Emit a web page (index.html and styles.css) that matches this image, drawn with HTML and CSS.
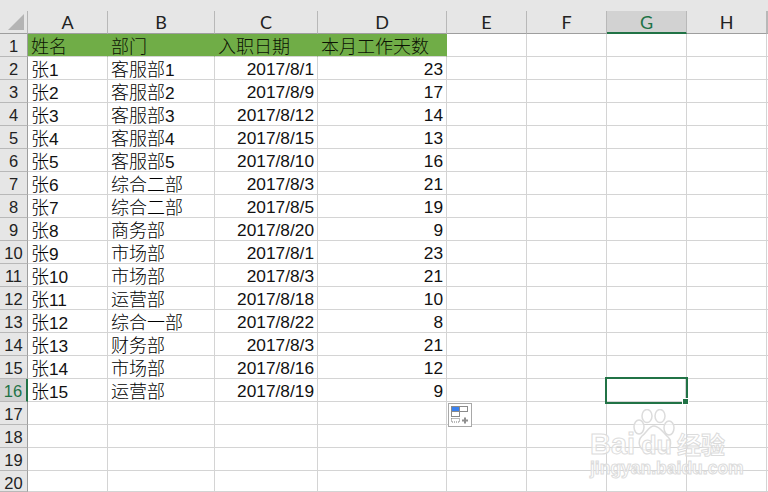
FILE: index.html
```html
<!DOCTYPE html>
<html lang="zh-CN">
<head>
<meta charset="utf-8">
<title>Sheet</title>
<link rel="stylesheet" href="styles.css">
</head>
<body>
<div class="top-band"></div>
<div class="sheet">
<div class="corner"><svg width="28" height="22" viewBox="0 0 28 22"><polygon points="8,19 24,19 24,3" fill="#b4b4b4"/></svg></div>
<div class="ch">A</div><div class="ch">B</div><div class="ch">C</div><div class="ch">D</div><div class="ch">E</div><div class="ch">F</div><div class="ch sel-col">G</div><div class="ch">H</div><div class="ch"></div>

<div class="rh">1</div><div class="c g">姓名</div><div class="c g">部门</div><div class="c g">入职日期</div><div class="c g">本月工作天数</div><div class="c"></div><div class="c"></div><div class="c"></div><div class="c"></div><div class="c"></div>
<div class="rh">2</div><div class="c">张<span class="n">1</span></div><div class="c">客服部<span class="n">1</span></div><div class="c r n">2017/8/1</div><div class="c r n">23</div><div class="c"></div><div class="c"></div><div class="c"></div><div class="c"></div><div class="c"></div>
<div class="rh">3</div><div class="c">张<span class="n">2</span></div><div class="c">客服部<span class="n">2</span></div><div class="c r n">2017/8/9</div><div class="c r n">17</div><div class="c"></div><div class="c"></div><div class="c"></div><div class="c"></div><div class="c"></div>
<div class="rh">4</div><div class="c">张<span class="n">3</span></div><div class="c">客服部<span class="n">3</span></div><div class="c r n">2017/8/12</div><div class="c r n">14</div><div class="c"></div><div class="c"></div><div class="c"></div><div class="c"></div><div class="c"></div>
<div class="rh">5</div><div class="c">张<span class="n">4</span></div><div class="c">客服部<span class="n">4</span></div><div class="c r n">2017/8/15</div><div class="c r n">13</div><div class="c"></div><div class="c"></div><div class="c"></div><div class="c"></div><div class="c"></div>
<div class="rh">6</div><div class="c">张<span class="n">5</span></div><div class="c">客服部<span class="n">5</span></div><div class="c r n">2017/8/10</div><div class="c r n">16</div><div class="c"></div><div class="c"></div><div class="c"></div><div class="c"></div><div class="c"></div>
<div class="rh">7</div><div class="c">张<span class="n">6</span></div><div class="c">综合二部</div><div class="c r n">2017/8/3</div><div class="c r n">21</div><div class="c"></div><div class="c"></div><div class="c"></div><div class="c"></div><div class="c"></div>
<div class="rh">8</div><div class="c">张<span class="n">7</span></div><div class="c">综合二部</div><div class="c r n">2017/8/5</div><div class="c r n">19</div><div class="c"></div><div class="c"></div><div class="c"></div><div class="c"></div><div class="c"></div>
<div class="rh">9</div><div class="c">张<span class="n">8</span></div><div class="c">商务部</div><div class="c r n">2017/8/20</div><div class="c r n">9</div><div class="c"></div><div class="c"></div><div class="c"></div><div class="c"></div><div class="c"></div>
<div class="rh">10</div><div class="c">张<span class="n">9</span></div><div class="c">市场部</div><div class="c r n">2017/8/1</div><div class="c r n">23</div><div class="c"></div><div class="c"></div><div class="c"></div><div class="c"></div><div class="c"></div>
<div class="rh">11</div><div class="c">张<span class="n">10</span></div><div class="c">市场部</div><div class="c r n">2017/8/3</div><div class="c r n">21</div><div class="c"></div><div class="c"></div><div class="c"></div><div class="c"></div><div class="c"></div>
<div class="rh">12</div><div class="c">张<span class="n">11</span></div><div class="c">运营部</div><div class="c r n">2017/8/18</div><div class="c r n">10</div><div class="c"></div><div class="c"></div><div class="c"></div><div class="c"></div><div class="c"></div>
<div class="rh">13</div><div class="c">张<span class="n">12</span></div><div class="c">综合一部</div><div class="c r n">2017/8/22</div><div class="c r n">8</div><div class="c"></div><div class="c"></div><div class="c"></div><div class="c"></div><div class="c"></div>
<div class="rh">14</div><div class="c">张<span class="n">13</span></div><div class="c">财务部</div><div class="c r n">2017/8/3</div><div class="c r n">21</div><div class="c"></div><div class="c"></div><div class="c"></div><div class="c"></div><div class="c"></div>
<div class="rh">15</div><div class="c">张<span class="n">14</span></div><div class="c">市场部</div><div class="c r n">2017/8/16</div><div class="c r n">12</div><div class="c"></div><div class="c"></div><div class="c"></div><div class="c"></div><div class="c"></div>
<div class="rh sel-row">16</div><div class="c">张<span class="n">15</span></div><div class="c">运营部</div><div class="c r n">2017/8/19</div><div class="c r n">9</div><div class="c"></div><div class="c"></div><div class="c active"><span class="handle"></span></div><div class="c"></div><div class="c"></div>
<div class="rh">17</div><div class="c"></div><div class="c"></div><div class="c"></div><div class="c"></div><div class="c qa-host"><span class="qa"><svg width="24" height="24" viewBox="0 0 24 24"><rect x="3.500" y="3.500" width="8" height="5" fill="#3b82f0" stroke="#8a8a8a"/><rect x="11.500" y="3.500" width="8" height="5" fill="#fff" stroke="#8a8a8a"/><rect x="3.500" y="8.500" width="8" height="5" fill="#fff" stroke="#8a8a8a"/><rect x="3.500" y="15.500" width="8" height="3.500" fill="none" stroke="#777" stroke-dasharray="1 1"/><path d="M14 17.500h6M17 14.500v6" stroke="#8f8f8f" stroke-width="2" fill="none"/></svg></span></div><div class="c"></div><div class="c"></div><div class="c"></div><div class="c"></div>
<div class="rh">18</div><div class="c"></div><div class="c"></div><div class="c"></div><div class="c"></div><div class="c"></div><div class="c"></div><div class="c"></div><div class="c"></div><div class="c"></div>
<div class="rh">19</div><div class="c"></div><div class="c"></div><div class="c"></div><div class="c"></div><div class="c"></div><div class="c"></div><div class="c"></div><div class="c"></div><div class="c"></div>
<div class="rh">20</div><div class="c"></div><div class="c"></div><div class="c"></div><div class="c"></div><div class="c"></div><div class="c"></div><div class="c"></div><div class="c"></div><div class="c"></div>
</div>
<div class="wm">
<svg class="paw" width="46" height="48" viewBox="0 0 46 48"><g fill="rgba(255,255,255,.6)" stroke="#dcdcdc" stroke-width="1.500"><ellipse cx="7" cy="18" rx="5" ry="7"/><ellipse cx="15" cy="7" rx="5" ry="6.500"/><ellipse cx="28" cy="7" rx="5" ry="6.500"/><ellipse cx="37" cy="19" rx="5" ry="7"/><path d="M22 17c-5 0-7 6-12 10-5 5-3 15 5 14 4 0 10-2 15 0 8 2 11-8 6-13-5-4-8-11-14-11z"/></g></svg>
<span class="wm-main">Bai<span class="wm-du">du</span></span>
<span class="wm-cn">经验</span>
<span class="wm-sub">jingyan.baidu.com</span>
</div>
</body>
</html>
```
FILE: styles.css
```css
html, body {
  margin: 0;
  padding: 0;
  width: 768px;
  height: 492px;
  overflow: hidden;
  background: #fff;
}
body {
  position: relative;
  font-family: "Noto Sans CJK SC", "Lato", sans-serif;
  color: #111;
}
.top-band {
  height: 11px;
  background: #e6e6e6;
}
.sheet {
  display: grid;
  grid-template-columns: 28px 80px 107px 103px 129px 80px 80px 80px 80px 1px;
  grid-template-rows: repeat(20, 23px) 21px;
  width: 768px;
}
.corner {
  background: #e6e6e6;
  border-right: 1px solid #b5b5b5;
  border-bottom: 1px solid #9e9e9e;
  box-sizing: border-box;
  height: 23px;
}
.corner svg { display: block; }
.ch {
  box-sizing: border-box;
  background: #e6e6e6;
  border-right: 1px solid #b8b8b8;
  border-bottom: 1px solid #9e9e9e;
  text-align: center;
  font-family: "Lato", sans-serif;
  font-size: 18px;
  line-height: 23px;
  color: #222;
}
.sel-col {
  background: #d2d2d2;
  border-bottom: 2px solid #217346;
  color: #217346;
}
.rh {
  box-sizing: border-box;
  background: #e6e6e6;
  border-right: 1px solid #9e9e9e;
  border-bottom: 1px solid #b8b8b8;
  text-align: center;
  font-family: "Liberation Sans", sans-serif;
  font-size: 16.500px;
  line-height: 24px;
  color: #222;
  overflow: hidden;
}
.sel-row {
  background: #d2d2d2;
  border-right: 2px solid #217346;
  color: #217346;
}
.c {
  box-sizing: border-box;
  position: relative;
  border-right: 1px solid #d4d4d4;
  border-bottom: 1px solid #d4d4d4;
  padding: 0 3px;
  font-size: 18px;
  line-height: 22px;
  white-space: nowrap;
  color: #000;
  font-weight: 300;
}
.n {
  font-family: "Liberation Sans", sans-serif;
  font-size: 17.300px;
  font-weight: 400;
  line-height: 22px;
  color: #111;
}
.c.n { line-height: 24px; }
.r { text-align: right; }
.g {
  background: #70ad47;
  border-right-color: #70ad47;
  color: #0c1204;
}
.active { outline: 2px solid #217346; outline-offset: 0; z-index: 2; margin: 0 1px 0 0; }
.handle {
  position: absolute;
  right: -4px;
  bottom: -4px;
  width: 5px;
  height: 5px;
  background: #217346;
  border: 1px solid #fff;
}
.qa-host { z-index: 3; }
.qa {
  position: absolute;
  left: 1px;
  top: 1px;
  width: 24px;
  height: 24px;
  box-sizing: border-box;
  background: #fff;
  border: 1px solid #a8a8a8;
}
.qa svg { display: block; margin: -1px; }
.wm {
  position: absolute;
  left: 590px;
  top: 408px;
  width: 170px;
  height: 76px;
  pointer-events: none;
  z-index: 4;
}
.paw { position: absolute; left: 42px; top: 1px; }
.wm-main {
  position: absolute;
  left: 0;
  top: 19px;
  font: bold 29px/34px "Liberation Sans", sans-serif;
  white-space: nowrap;
  color: rgba(255,255,255,.6);
  -webkit-text-stroke: 1px #dcdcdc;
}
.wm-du { font-size: 25px; margin-left: 6px; }
.wm-cn {
  position: absolute;
  left: 87px;
  top: 19px;
  font: bold 24px/34px "Noto Sans CJK SC", sans-serif;
  white-space: nowrap;
  color: rgba(255,255,255,.6);
  -webkit-text-stroke: 1px #dcdcdc;
}
.wm-sub {
  position: absolute;
  left: 0;
  top: 50px;
  font: bold 17.500px/20px "Liberation Sans", sans-serif;
  white-space: nowrap;
  color: rgba(255,255,255,.6);
  -webkit-text-stroke: 1px #dcdcdc;
}
```
